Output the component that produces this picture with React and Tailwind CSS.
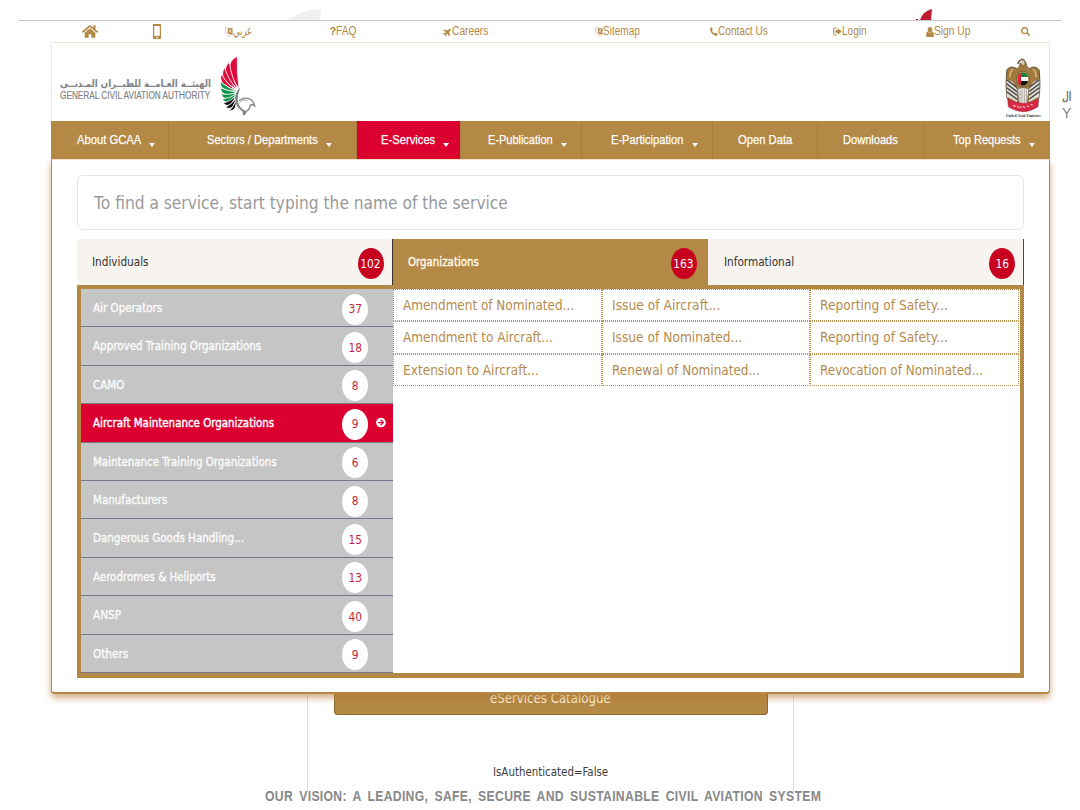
import React, { useLayoutEffect, useRef, useState } from "react";
import { FaHome, FaPlane, FaSearch, FaArrowCircleRight } from "react-icons/fa";

// Condensed label: stretches or squeezes its text to the given width.
function Fit({ w, className = "", children }) {
  const ref = useRef(null);
  const [k, setK] = useState(1);
  useLayoutEffect(() => {
    setK(w / ref.current.offsetWidth);
  }, [w]);
  return (
    <span className={"block shrink-0 whitespace-nowrap " + className} style={{ width: w }}>
      <span ref={ref} className="inline-block origin-left" style={{ transform: `scaleX(${k})` }}>
        {children}
      </span>
    </span>
  );
}

const Mobile = () => (
  <svg width="8" height="15" viewBox="0 0 8 15">
    <path fillRule="evenodd" fill="#b48845" d="M1 0h6a1 1 0 0 1 1 1v13a1 1 0 0 1-1 1H1a1 1 0 0 1-1-1V1a1 1 0 0 1 1-1zM1.2 2v9.8h5.6V2zM3.2 12.7v1.3h1.6v-1.3z" />
  </svg>
);
const Translate = () => (
  <svg width="8" height="11" viewBox="0 0 8 11" fill="none" stroke="#b48845">
    <path d="M.5 1.5l4 .8v6l-4-1.6z" strokeWidth=".7" opacity=".55" />
    <path d="M3 2.5h4.3v6L3 7.2z" fill="#b48845" strokeWidth=".5" />
    <path d="M4 6.5l1.2-3 1.2 3.4" stroke="#fff" strokeWidth=".7" />
    <path d="M2 9.3l3 1 1.5-.9" strokeWidth=".6" opacity=".6" />
  </svg>
);
const Phone = () => (
  <svg width="8" height="9" viewBox="0 0 8 9">
    <path d="M.3 1Q1 .1 1.9.2L2.8 2.5 1.9 3.4Q2.6 5.4 4.6 6.6L5.4 5.7 7.7 6.8Q7.8 8 6.9 8.5 5 9.2 2.5 6.9-.4 4 .3 1z" fill="#b48845" />
  </svg>
);
const SignIn = () => (
  <svg width="9" height="9" viewBox="0 0 9 9">
    <path d="M3.6 1H1.7Q.7 1 .7 2v5q0 1 1 1h1.9" fill="none" stroke="#b48845" strokeWidth="1" />
    <path d="M2.4 3.3h2.3V1.2L8.8 4.5 4.7 7.8V5.7H2.4z" fill="#b48845" />
  </svg>
);
const Person = () => (
  <svg width="8" height="10" viewBox="0 0 8 10" fill="#b48845">
    <ellipse cx="4" cy="2.8" rx="2.3" ry="2.8" />
    <path d="M1.6 4.6Q4 7.4 6.4 4.6 8 5.3 8 8.3 8 10 6.8 10H1.2Q0 10 0 8.3 0 5.3 1.6 4.6z" />
  </svg>
);

const topItems = [
  { cell: "w-[71px]", icon: <FaHome className="h-[17px] w-[16px]" /> },
  { cell: "w-[72px]", icon: <Mobile /> },
  { cell: "w-[105px]", icon: <Translate />, text: "عربي", w: 19 },
  { cell: "w-[113px]", icon: <b className="text-[11px]">?</b>, text: "FAQ", w: 20.5 },
  { cell: "w-[152px]", icon: <FaPlane className="h-[10px] w-[9px] -rotate-45" />, text: "Careers", w: 36 },
  { cell: "w-[115px]", icon: <Translate />, text: "Sitemap", w: 37 },
  { cell: "w-[123px]", icon: <Phone />, text: "Contact Us", w: 50 },
  { cell: "w-[93px]", icon: <SignIn />, text: "Login", w: 25 },
  { cell: "w-[95px]", icon: <Person />, text: "Sign Up", w: 36 },
  { cell: "w-[20px]", icon: <FaSearch className="h-[11px] w-[9px]" /> },
];

const nav = [
  { cell: "w-[118px] pl-[26px]", text: "About GCAA", w: 64, caret: true },
  { cell: "w-[188px] pl-[38px]", text: "Sectors / Departments", w: 110.5, caret: true },
  { cell: "w-[104px] pl-[24px] bg-[#dc0030]", text: "E-Services", w: 54, caret: true },
  { cell: "w-[121px] pl-[27px]", text: "E-Publication", w: 65, caret: true },
  { cell: "w-[131px] pl-[29px]", text: "E-Participation", w: 72.5, caret: true },
  { cell: "w-[105px] pl-[25px]", text: "Open Data", w: 54 },
  { cell: "w-[106px] pl-[25px]", text: "Downloads", w: 55 },
  { cell: "w-[126px] pl-[29px]", text: "Top Requests", w: 68, caret: true },
];

const groups = [
  ["Air Operators", 69, 37],
  ["Approved Training Organizations", 168, 18],
  ["CAMO", 31, 8],
  ["Aircraft Maintenance Organizations", 181, 9],
  ["Maintenance Training Organizations", 184, 6],
  ["Manufacturers", 74, 8],
  ["Dangerous Goods Handling...", 151, 15],
  ["Aerodromes & Heliports", 123, 13],
  ["ANSP", 28, 40],
  ["Others", 35, 9],
];

const services = [
  ["Amendment of Nominated...", 171], ["Issue of Aircraft...", 108], ["Reporting of Safety...", 128],
  ["Amendment to Aircraft...", 150], ["Issue of Nominated...", 130], ["Reporting of Safety...", 128],
  ["Extension to Aircraft...", 136], ["Renewal of Nominated...", 148], ["Revocation of Nominated...", 163],
];

function FalconLogo() {
  return (
    <svg width="36" height="62" viewBox="0 0 108 186">
      <g stroke="#fff" strokeWidth="2.5">
        <g fill="#dc0b3c">
          <path d="M52 1Q26 12 29 40Q37 74 57 98Q50 50 52 1z" />
          <path d="M28 18Q9 35 20 60Q33 84 55 100Q34 65 28 18z" />
          <path d="M14 35Q1 54 14 72Q30 90 53 102Q26 75 14 35z" />
          <path d="M5 53Q-3 72 11 84Q28 98 52 104Q18 84 5 53z" />
        </g>
        <g fill="#109449">
          <path d="M2 76Q-1 94 15 101Q32 108 52 105Q20 95 2 76z" />
          <path d="M2 95Q2 113 20 116Q36 117 51 107Q22 106 2 95z" />
          <path d="M4 113Q9 132 26 129Q38 124 51 110Q24 118 4 113z" />
          <path d="M7 128Q16 145 32 136Q42 126 50 114Q26 129 7 128z" />
        </g>
        <g fill="#111">
          <path d="M10 142Q21 154 34 143L49 120Q30 136 10 142z" />
          <path d="M17 154Q29 162 40 150L50 126Q34 144 17 154z" />
          <path d="M28 165Q40 166 46 154L51 132Q40 150 28 165z" />
        </g>
      </g>
      <path d="M61 95Q45 105 46 130Q46 152 67 166L70 180L80 171L76 164Q54 154 53 132Q53 112 61 95z" fill="#808387" />
      <path d="M57 134Q68 125 84 127Q101 132 104 150Q96 143 90 149Q90 162 74 168" fill="none" stroke="#808387" strokeWidth="4" />
      <path d="M57 143Q66 129 82 133M67 126L84 128" fill="none" stroke="#9a9c9f" strokeWidth="2.5" />
    </svg>
  );
}

function Emblem() {
  return (
    <svg width="36" height="55" viewBox="0 0 108 165">
      <path d="M50 3Q39 7 38 17L46 15Q45 28 36 32Q16 20 5 36Q1 80 5 118L20 136H88L103 118Q107 75 103 36Q90 20 72 32Q63 25 62 12Q57 2 50 3z" fill="#a07a3f" stroke="#3b3127" strokeWidth="2" />
      <path d="M44 10Q52 3 59 12L57 20Q49 21 48 15L41 17z" fill="#d3d0c8" />
      <path d="M5 63l19 10 12 22v38l-17-10L5 116zM103 63L84 73 72 95v38l17-10 14-7z" fill="#ddd9d3" />
      <path d="M5 65l30 23M5 77l31 24M5 89l31 23M5 101l31 23M103 65L73 88M103 77l-31 24M103 89l-31 23M103 101l-31 23" stroke="#403d39" strokeWidth="4" fill="none" />
      <path d="M15 58q0-18 9-24M93 58q0-18-9-24" stroke="#d4b377" strokeWidth="5" fill="none" />
      <path d="M38 94Q54 84 71 94L66 140H43z" fill="#eeece8" stroke="#77716a" strokeWidth="2" />
      <path d="M45 96v36M51 92v42M58 92v42M64 96v36" stroke="#8f8a84" strokeWidth="2" />
      <ellipse cx="54" cy="63" rx="20" ry="24" fill="#b8935a" stroke="#5b4525" strokeWidth="2" />
      <clipPath id="disc"><ellipse cx="54" cy="63" rx="16" ry="20" /></clipPath>
      <g clipPath="url(#disc)">
        <path d="M38 43h32v14H38z" fill="#15803f" /><path d="M38 57h32v12H38z" fill="#fff" />
        <path d="M38 69h32v14H38z" fill="#151515" /><path d="M38 43h10v40H38z" fill="#e21d35" />
      </g>
      <path d="M8 122Q54 150 101 122L99 146Q54 176 10 146z" fill="#da2744" stroke="#8a1e30" strokeWidth="1.5" />
      <path d="M24 142l8 3m5-1l6 5m5-4v5m6-5l6 4m6-6l5 3m6-7l6 2" fill="none" stroke="#f7c9d0" strokeWidth="3.5" />
    </svg>
  );
}

const Badge = ({ children, className }) => (
  <span className={"flex h-[31px] w-[26px] shrink-0 items-center justify-center rounded-[50%] font-['DejaVu_Sans',sans-serif] text-[13px] " + className}>
    <span className="scale-x-[0.82]">{children}</span>
  </span>
);

export default function App() {
  return (
    <div className="relative h-[810px] w-[1080px] overflow-hidden bg-white font-['Liberation_Sans',sans-serif]">
      <svg className="absolute left-[288px] top-[9px]" width="35" height="11" viewBox="0 0 35 11"><path d="M0 11Q15 0 34 0L31 11z" fill="#f0f0f0" /></svg>
      <svg className="absolute left-[916px] top-[9px]" width="18" height="11" viewBox="0 0 18 11"><path d="M4 11Q7 2 16 0L15 11H4zM0 10h2v1H0z" fill="#c01c30" /></svg>
      <div className="absolute left-[1062px] top-[89px] w-[18px] text-[#7c7e81]">
        <Fit w={9.5} className="h-[15px] font-['DejaVu_Sans',sans-serif] text-[12.5px] font-bold leading-[15px]"><bdi dir="rtl">ال</bdi></Fit>
        <div className="text-[14px] leading-[18px]">Y</div>
      </div>

      <div className="mx-[18px] mt-5 h-px bg-[#c6c9c9]" />
      <header className="ml-[51px] w-[999px]">
        <div className="flex h-[21px] items-center pl-[30.5px] text-[#b48845]">
          {topItems.map((t, i) => (
            <div key={i} className={"flex h-full shrink-0 items-center " + t.cell}>
              {t.icon}
              {t.text && <Fit w={t.w} className="-mt-[2px] font-['Liberation_Sans','DejaVu_Sans',sans-serif] text-[12.5px] leading-[18px]">{t.text}</Fit>}
            </div>
          ))}
        </div>
        <div className="flex h-[79px] justify-between border border-b-0 border-[#f3e7d4] pl-[8px] pr-[8px]">
          <div className="flex">
            <div className="mt-[34px] text-[#808285]">
              <Fit w={151} className="font-['DejaVu_Sans',sans-serif] text-[10px] font-bold leading-[13px]"><bdi dir="rtl">الهيئــة العـامــة للطيــران المـدنــي</bdi></Fit>
              <Fit w={150} className="-mt-px text-[10px] leading-[13px] [-webkit-text-stroke:0.15px_#808285]">GENERAL CIVIL AVIATION AUTHORITY</Fit>
            </div>
            <div className="ml-[9px] mt-[13px]"><FalconLogo /></div>
          </div>
          <div className="mt-[15px] flex w-[36px] flex-col items-center">
            <Emblem />
            <Fit w={35} className="font-['Liberation_Serif',serif] text-[4px] font-bold leading-[5px] text-[#334]">United Arab Emirates</Fit>
          </div>
        </div>
        <nav className="flex h-[38px] bg-[#b48845] text-white">
          {nav.map((n) => (
            <div key={n.text} className={"flex shrink-0 border-r border-[#a97e3d] last:border-r-0 " + n.cell}>
              <Fit w={n.w} className="mt-[10px] text-[13.5px] leading-[18px] [-webkit-text-stroke:0.25px_white]">{n.text}</Fit>
              {n.caret && <span className="ml-[8px] mt-[22px] h-0 w-0 border-x-[3.5px] border-t-[4px] border-x-transparent border-t-white" />}
            </div>
          ))}
        </nav>
      </header>

      <main className="relative z-10 ml-[51px] h-[535px] w-[999px] rounded-b-[4px] border border-b-2 border-[#b48845] border-t-[#f9dfc8] bg-white px-[25px] pt-[15px] font-['DejaVu_Sans_Condensed','DejaVu_Sans',sans-serif] shadow-[0_4px_7px_rgba(180,120,50,0.6)]">
        <div className="flex h-[55px] w-[947px] items-center rounded-[6px] border border-[#e5e5e7] pl-4 text-[#999]">
          <Fit w={414} className="font-['DejaVu_Sans',sans-serif] text-[18.5px] leading-[26px]">To find a service, start typing the name of the service</Fit>
        </div>
        <div className="mt-[9px] flex h-[46px] w-[947px] text-[13px]">
          <div className="flex w-[316px] justify-between border-r border-[#35302b] bg-[#f7f3ee] pl-[15px] pr-[8.5px] text-[#333]">
            <Fit w={56.5} className="mt-[14px] leading-[18px]">Individuals</Fit>
            <Badge className="mt-[9px] bg-[#c7001f] text-white">102</Badge>
          </div>
          <div className="flex w-[315px] justify-between bg-[#b48845] pl-[15px] pr-[11.5px] text-[#fff8ec]">
            <Fit w={71} className="mt-[14px] leading-[18px] [-webkit-text-stroke:0.4px_#fff8ec]">Organizations</Fit>
            <Badge className="mt-[9px] bg-[#c7001f] text-white">163</Badge>
          </div>
          <div className="flex w-[316px] justify-between border-r border-[#4a4a4a] bg-[#f7f3ee] pl-[16px] pr-[8px] text-[#333]">
            <Fit w={70} className="mt-[14px] leading-[18px]">Informational</Fit>
            <Badge className="mt-[9px] bg-[#c7001f] text-white">16</Badge>
          </div>
        </div>
        <div className="flex h-[393px] w-[947px] border-4 border-b-[5px] border-[#b48845]">
          <div className="flex w-[312px] shrink-0 flex-col">
            {groups.map(([name, w, count]) => {
              const active = name.startsWith("Aircraft");
              return (
                <div key={name} className={"flex flex-1 items-start border-b-[1.5px] border-[#77768a] pl-[11.5px] " + (active ? "bg-[#dc0030] text-white" : "bg-[#c5c5c5] text-[#fafafa]")}>
                  <div className="flex w-[249.5px]"><Fit w={w} className="mt-[10px] text-[13px] leading-[18px] [-webkit-text-stroke:0.4px_currentColor]">{name}</Fit></div>
                  <Badge className="mt-[4.5px] bg-white text-[#c21f42]">{count}</Badge>
                  {active && <FaArrowCircleRight className="ml-[8px] mt-[13px] h-[11px] w-[10px]" />}
                </div>
              );
            })}
          </div>
          <div className="grid h-[97px] w-[626px] grid-cols-3 grid-rows-3">
            {services.map(([name, w], i) => (
              <div key={i} className="flex items-center border border-dotted border-[#bd9455] pl-[9px] text-[#b58b4c]">
                <Fit w={w} className="font-['DejaVu_Sans',sans-serif] text-[14.5px] leading-[20px]">{name}</Fit>
              </div>
            ))}
          </div>
        </div>
      </main>

      <section className="ml-[307px] h-[97px] w-[487px] border-x border-[#dedede] font-['DejaVu_Sans_Condensed','DejaVu_Sans',sans-serif]">
        <div className="ml-[26px] h-[21px] w-[434px] rounded-b-[4px] border border-t-0 border-[#8a662f] bg-[#b48845] pl-[155px] text-[#fff5df]">
          <Fit w={121} className="relative -top-[6px] text-[14.5px] leading-[20px]">eServices Catalogue</Fit>
        </div>
        <Fit w={115} className="ml-[184.5px] mt-[48px] text-[12.5px] leading-[18px] text-[#404040]">IsAuthenticated=False</Fit>
      </section>
      <footer className="-mt-[5px] ml-[265px] text-[#87888a]">
        <Fit w={556} className="text-[15px] font-bold leading-[20px] tracking-[0.4px] [word-spacing:3px]">OUR VISION: A LEADING, SAFE, SECURE AND SUSTAINABLE CIVIL AVIATION SYSTEM</Fit>
      </footer>
    </div>
  );
}
